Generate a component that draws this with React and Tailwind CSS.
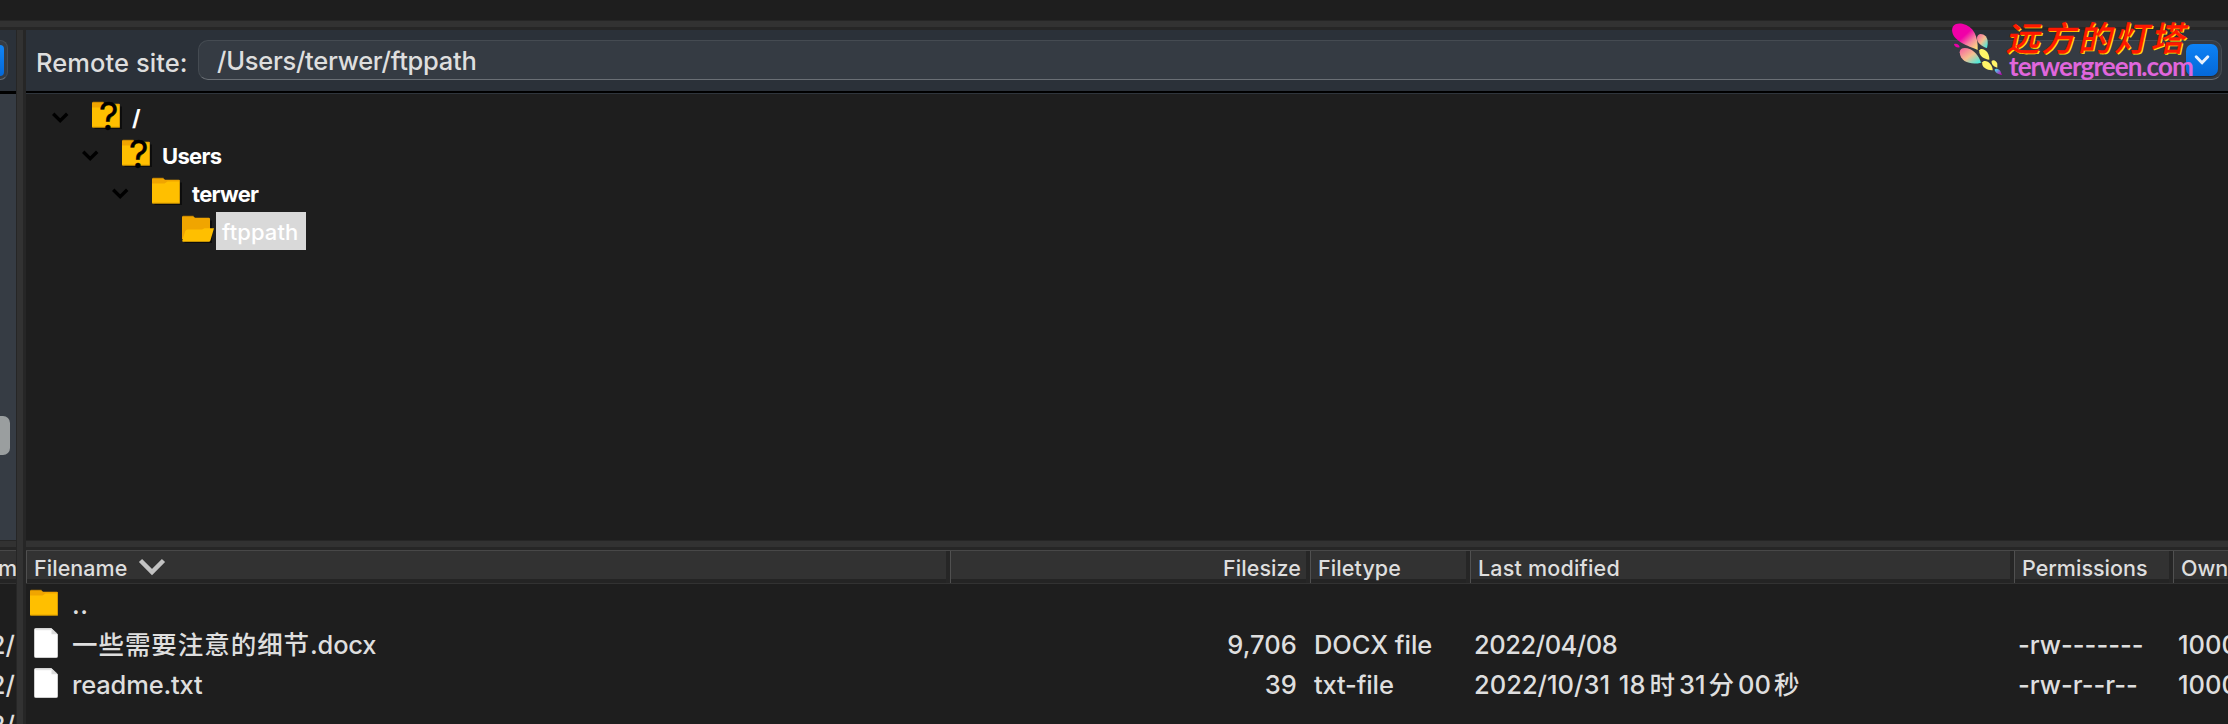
const GRID = "grid grid-cols-[924px_360px_160px_544px_159px_1fr]";

function Folder({ unknown, open, shadow }) {
  return (
    <svg width="34" height="34" viewBox="0 0 34 34" className="block shrink-0 overflow-visible">
      {shadow && (
        <path d="M2 5h27.5v22.5H2z" fill="#000" opacity="0.55" transform="translate(0.5 0.5)" />
      )}
      <path d="M0 2.2Q0 1 1.2 1H11l2 1.8h13.8Q28 2.8 28 4v20H0z" fill="#f0a500" />
      <path d="M0.8 1.2H11.5" stroke="#b87b00" strokeWidth="0.8" />
      {open ? (
        <path d="M5.5 14.5H20l2.500-1.200h9.500l-3.600 12.200q-.4 1.200-1.600 1.200H1.200Q0 26.700.3 25.400L3.300 16q.5-1.500 2.200-1.500z" fill="#ffbf00" />
      ) : (
        <>
          <path d="M0 6.600h12.500l3-2.200H28v21Q28 26.600 26.800 26.600H1.200Q0 26.600 0 25.400z" fill="#ffbf00" />
          <path d="M0.600 26.200H27.500V3.500" fill="none" stroke="#c98f00" strokeWidth="0.8" />
        </>
      )}
      {unknown && (
        <text x="7" y="28.500" fontFamily="Inter, sans-serif" fontWeight="400" fontSize="38" fill="#000" stroke="#000" strokeWidth="0.4">?</text>
      )}
    </svg>
  );
}

function FileIcon() {
  return (
    <svg width="24" height="30" viewBox="0 0 24 30" className="block">
      <path d="M1.500.5H17.500L23.500 6.200V28.500Q23.500 29.500 22.500 29.500H1.500Q.5 29.500.5 28.500V1.500Q.5.500 1.500.5z" fill="#fff" stroke="#cfcfcf" />
      <path d="M1.500 1.500H17" stroke="#e4e4e4" strokeWidth="1.500" />
      <path d="M17.500.8V6.200H23z" fill="#dcdcdc" />
    </svg>
  );
}

function TreeRow({ indent, label, unknown, open, leaf, selected }) {
  return (
    <div className="flex h-[38px]">
      <div className={`${indent} shrink-0`} />
      <div className="w-[40px] shrink-0 pt-[14px]">
        {!leaf && (
          <svg width="18" height="12" viewBox="0 0 18 12" className="block">
            <path d="M1.200 1.700L8.200 8.700L15.200 1.700" fill="none" stroke="#000" strokeWidth="3.400" />
          </svg>
        )}
      </div>
      <div className="w-[34px] shrink-0 pt-[3px]">
        <Folder unknown={unknown} open={open} shadow />
      </div>
      <span
        className={
          selected
            ? "h-[38px] w-[90px] bg-[#d9d9d9] pl-[6px] text-[22px] leading-[41px] font-medium tracking-[0.090px] text-white"
            : "h-[38px] pl-[6px] text-[22px] leading-[41px] font-bold tracking-[-0.700px] text-white"
        }
      >
        {label}
      </span>
    </div>
  );
}

function HeadCell({ children, className = "", last }) {
  return (
    <div className="flex h-[32px] border-l-[1.500px] border-[#505050]">
      <div className={`min-w-0 flex-1 border-b-4 border-[#242424] bg-[#323232] text-[21.500px] leading-[34px] font-medium whitespace-nowrap ${className}`}>
        {children}
      </div>
      {!last && <div className="w-[4px] shrink-0 bg-[#262626]" />}
    </div>
  );
}

function Row({ icon, name, nameClass = "", size = "", sizeClass = "", type = "", typeClass = "pl-[4px]", date = "", dateClass = "", perms = "", owner = "" }) {
  return (
    <div className={`${GRID} h-[40px] text-[25.500px] leading-[40px] font-[450] whitespace-nowrap`}>
      <div className="flex">
        <div className="w-[46px] shrink-0">{icon}</div>
        <span className={nameClass}>{name}</span>
      </div>
      <div className={`pr-[13px] text-right ${sizeClass}`}>{size}</div>
      <div className={typeClass}>{type}</div>
      <div className={`pl-[4px] ${dateClass}`}>{date}</div>
      <div className="pl-[4px]">{perms}</div>
      <div className="overflow-hidden pl-[5px]">{owner}</div>
    </div>
  );
}

function SplitterH() {
  return (
    <div className="h-[10px] shrink-0 border-t border-b-3 border-t-[#262626] border-b-[#262626] bg-[#323232]" />
  );
}

function LeftPane() {
  return (
    <div className="flex w-[16px] shrink-0 flex-col overflow-hidden">
      <div className="flex h-[64px] shrink-0 items-start border-b-3 border-black bg-[#2b3139] pt-[10px]">
        <div className="h-[40px] w-[8px] rounded-r-[9px] border border-l-0 border-[#454b52] border-b-[#6a6f75] bg-[#353b43] pt-[4px]">
          <div className="h-[31px] w-[4px] rounded-r-[5px] bg-linear-to-b from-[#1285f5] to-[#0568d8]" />
        </div>
      </div>
      <div className="h-[446px] shrink-0 bg-[#363c44] pt-[322px]">
        <div className="h-[39px] w-[10px] rounded-r-[7px] bg-[#9a9e9f]" />
      </div>
      <SplitterH />
      <div className="flex h-[34px] shrink-0 flex-col border-t border-b border-t-[#484848] border-b-[#323232]">
        <div className="flex h-[32px] justify-end border-b-4 border-[#242424] bg-[#323232] text-[21.500px] leading-[34px] font-medium">
          <span className="-mr-[1px]">m</span>
        </div>
      </div>
      <div className="flex flex-col pt-[41px] text-[25.500px] leading-[40px] font-[450]">
        <div className="flex h-[40px] justify-end pr-[1px]">2/</div>
        <div className="flex h-[40px] justify-end pr-[1px]">2/</div>
        <div className="flex h-[40px] justify-end pr-[1px]">2/</div>
      </div>
    </div>
  );
}

function Watermark() {
  return (
    <div className="absolute top-[15px] left-[1945px] flex">
      <svg width="70" height="65" viewBox="0 0 210 195" className="block">
        <defs>
          <linearGradient id="big" x1="0.15" y1="0.1" x2="0.95" y2="1">
            <stop offset="0.400" stopColor="#f000a8" />
            <stop offset="0.680" stopColor="#f58aa0" />
            <stop offset="1" stopColor="#ffe878" />
          </linearGradient>
          <linearGradient id="side" x1="0.1" y1="0.1" x2="0.9" y2="0.9">
            <stop offset="0" stopColor="#f5709c" />
            <stop offset="0.500" stopColor="#f5c090" />
            <stop offset="1" stopColor="#50e8d8" />
          </linearGradient>
          <linearGradient id="tip" x1="0" y1="0" x2="1" y2="1">
            <stop offset="0.200" stopColor="#50c8e8" />
            <stop offset="0.900" stopColor="#c000b0" />
          </linearGradient>
        </defs>
        <path d="M22 52C18 32 32 22 52 26C86 32 100 66 98 105C68 92 28 80 22 52z" fill="url(#big)" />
        <path d="M96 68C98 54 112 54 122 64C130 73 129 86 126 99C111 94 95 84 96 68z" fill="url(#side)" />
        <path d="M27 87C34 84 43 87 44 97C35 99 28 95 27 87z" fill="#e800a8" />
        <path d="M44 112C44 98 60 96 76 103C94 112 103 128 108 143C82 150 46 144 44 112z" fill="url(#side)" />
        <path d="M103 106C108 98 120 103 127 112C132 120 133 127 133 134C118 134 100 122 103 106z" fill="#fff568" />
        <path d="M112 142C117 134 129 138 136 147C142 155 143 160 143 166C128 167 108 157 112 142z" fill="#fff568" />
        <path d="M140 138C146 133 154 138 157 146V158C147 156 138 148 140 138z" fill="#fff568" />
        <path d="M149 163C154 158 163 163 166 168L171 180C160 178 149 174 149 163z" fill="url(#tip)" />
      </svg>
      <div className="-ml-[8px] flex flex-col whitespace-nowrap">
        <span className="ml-[2px] block h-[38px] origin-left -skew-x-12 font-['Noto_Sans_CJK_SC',sans-serif] text-[34px] leading-[44px] font-medium tracking-[2.200px] text-[#ff1800] [-webkit-text-stroke:0.4px_#ff1800] [text-shadow:1.5px_1px_0_#ffe600]">
          远方的灯塔
        </span>
        <span className="ml-[2px] block h-[30px] font-['Lato','Inter',sans-serif] text-[26px] leading-[27px] font-bold tracking-[-0.940px] text-[#e066dc]">
          terwergreen.com
        </span>
      </div>
    </div>
  );
}

export default function App() {
  return (
    <div className="relative flex h-[724px] w-[2228px] flex-col overflow-hidden bg-[#1e1e1e] font-['Inter','Noto_Sans_CJK_SC',sans-serif] text-[#dedede]">
      <div className="h-[20px] shrink-0" />
      <SplitterH />
      <div className="flex min-h-0 flex-1">
        <LeftPane />
        <div className="w-[10px] shrink-0 border-r-3 border-l border-[#262626] bg-[#323232]" />
        <div className="flex min-w-0 flex-1 flex-col">
          <div className="flex h-[61px] shrink-0 bg-[#2b3139] pt-[10px] text-[25.500px] font-[450]">
            <span className="w-[172px] shrink-0 pl-[10px] leading-[46px] tracking-[0.080px]">Remote site:</span>
            <div className="flex h-[40px] w-[2024px] justify-between rounded-[10px] border border-[#454b52] border-b-[#6a6f75] bg-[#353b43] pr-[3px] pl-[18px]">
              <span className="leading-[39px] tracking-[-0.280px]">/Users/terwer/ftppath</span>
              <div className="mt-[3px] flex h-[32px] w-[32px] items-center justify-center rounded-[7px] bg-linear-to-b from-[#0d82f5] to-[#0568d8] shadow-[0_1px_1px_rgba(0,0,0,0.35)]">
                <svg width="16" height="12" viewBox="0 0 16 12">
                  <path d="M2.200 2.800L8 8.800L13.800 2.800" fill="none" stroke="#e8f1fd" strokeWidth="3" strokeLinecap="round" strokeLinejoin="round" />
                </svg>
              </div>
            </div>
          </div>
          <div className="h-[3px] shrink-0 border-b border-[#2f353c] bg-black" />
          <div className="h-[446px] shrink-0 pt-[4px]">
            <TreeRow indent="w-[26px]" label="/" unknown />
            <TreeRow indent="w-[56px]" label="Users" unknown />
            <TreeRow indent="w-[86px]" label="terwer" />
            <TreeRow indent="w-[116px]" label="ftppath" open leaf selected />
          </div>
          <SplitterH />
          <div className={`${GRID} h-[34px] shrink-0 border-t border-b border-t-[#484848] border-b-[#323232]`}>
            <HeadCell className="flex items-start pl-[7px]">
              <span className="tracking-[0.050px]">Filename</span>
              <svg width="28" height="18" viewBox="0 0 28 18" className="mt-[7px] ml-[11px]">
                <path d="M2.500 2.500L14 14L25.500 2.500" fill="none" stroke="#c2c2c2" strokeWidth="4.500" />
              </svg>
            </HeadCell>
            <HeadCell className="pr-[5px] text-right tracking-[0.080px]">Filesize</HeadCell>
            <HeadCell className="pl-[7px] tracking-[0.100px]">Filetype</HeadCell>
            <HeadCell className="pl-[7px] tracking-[0.200px]">Last modified</HeadCell>
            <HeadCell className="pl-[7px]">Permissions</HeadCell>
            <HeadCell last className="pl-[7px]">Owner</HeadCell>
          </div>
          <div className="flex flex-col pt-[1px]">
            <Row
              icon={<div className="pt-[4px] pl-[4px]"><Folder /></div>}
              name=".."
              nameClass="tracking-[0.500px]"
            />
            <Row
              icon={<div className="pt-[3px] pl-[8px]"><FileIcon /></div>}
              name={<><span className="tracking-[0.950px]">一些需要注意的细节</span>.docx</>}
              nameClass="tracking-[-0.200px]"
              size="9,706"
              sizeClass="tracking-[0.100px]"
              type="DOCX file"
              typeClass="pl-[4px] tracking-[-0.050px]"
              date="2022/04/08"
              dateClass="tracking-[-0.480px]"
              perms="-rw-------"
              owner="1000 1000"
            />
            <Row
              icon={<div className="pt-[3px] pl-[8px]"><FileIcon /></div>}
              name="readme.txt"
              nameClass="tracking-[-0.160px]"
              size="39"
              sizeClass="tracking-[0.100px]"
              type="txt-file"
              typeClass="pl-[4px] tracking-[-0.150px]"
              date={
                <>
                  2022/10/31 18<span className="mx-[4px]">时</span>31<span className="mr-[4px] ml-[3px]">分</span>00
                  <span className="ml-[3px]">秒</span>
                </>
              }
              dateClass="[word-spacing:2px]"
              perms="-rw-r--r--"
              owner="1000 1000"
            />
          </div>
        </div>
      </div>
      <Watermark />
    </div>
  );
}
